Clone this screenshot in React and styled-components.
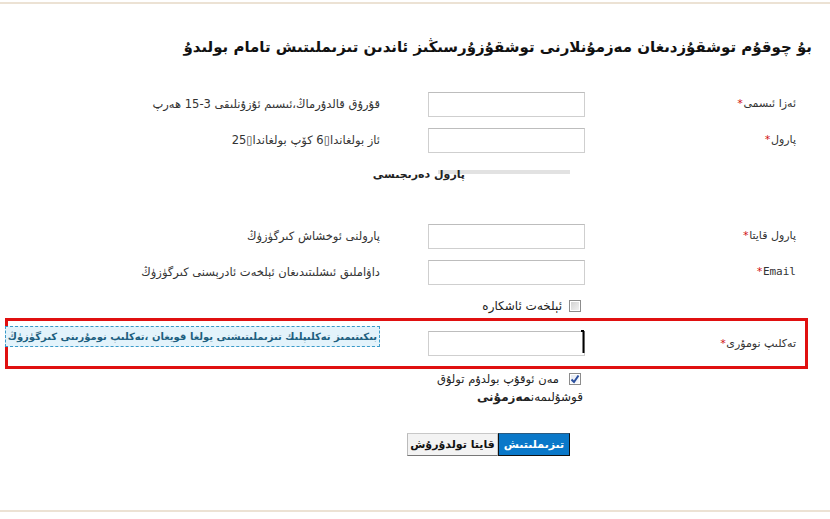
import React from 'react'
import styled, { createGlobalStyle } from 'styled-components'

const GlobalStyle = createGlobalStyle`
  html, body {
    margin: 0;
    padding: 0;
    background: #fff;
    overflow: hidden;
  }
  body {
    font-family: 'DejaVu Sans', Tahoma, sans-serif;
  }
`

const fields = [
  { label: 'ئەزا ئىسمى', hint: 'قۇرۇق قالدۇرماڭ،ئىسىم ئۇزۇنلىقى 3-15 ھەرپ' },
  { label: 'پارول', hint: 'ئاز بولغاندا▯6 كۆپ بولغاندا▯25', strength: true },
  { label: 'پارول قايتا', hint: 'پارولنى ئوخشاش كىرگۈزۈڭ', gap: true },
  { label: 'Email', hint: 'داۋاملىق ئىشلىتىدىغان ئېلخەت ئادرېسنى كىرگۈزۈڭ', mono: true }
]

const App = () => {
  return (
    <Page>
      <GlobalStyle />
      <Rule />
      <Title>بۇ چوقۇم توشقۇزدىغان مەزمۇنلارنى توشقۇزۇرسىڭىز ئاندىن تىزىملىتىش تامام بولىدۇ</Title>
      <Form>
        {fields.map(field => (
          <React.Fragment key={field.label}>
            <Row $gap={field.gap}>
              <Label $mono={field.mono}>
                {field.label}
                <Star>*</Star>
              </Label>
              <Input />
              <Hint>{field.hint}</Hint>
            </Row>
            {field.strength && (
              <StrengthRow>
                <span />
                <Strength>
                  <Bar />
                  <StrengthText>پارول دەرىجىسى</StrengthText>
                </Strength>
              </StrengthRow>
            )}
          </React.Fragment>
        ))}
        <CheckRow>
          <span />
          <CheckLine>
            <Box />
            <CheckText>ئېلخەت ئاشكارە</CheckText>
          </CheckLine>
        </CheckRow>
        <InviteRow>
          <InviteLabel>
            تەكلىپ نومۇرى
            <Star>*</Star>
          </InviteLabel>
          <InputWrap>
            <InviteInput />
            <Cursor width='6' height='24' viewBox='0 0 6 24'>
              <path d='M1 1 H4 M3.5 1 V23' stroke='#000' strokeWidth='2' fill='none' />
            </Cursor>
          </InputWrap>
          <TipCell>
            <Tip>بىكىتىمىز تەكلىپلىك تىزىملىتىشنى يولغا قويغان ،تەكلىپ نومۇرىنى كىرگۈزۈڭ</Tip>
          </TipCell>
        </InviteRow>
        <AgreeRow>
          <span />
          <CheckLine>
            <Box $checked>
              <svg width='10' height='10' viewBox='0 0 10 10'>
                <path d='M1.5 5.5 L4 8 L8.5 1.5' stroke='#2a4f9e' strokeWidth='2' fill='none' />
              </svg>
            </Box>
            <CheckText $wide>مەن ئوقۇپ بولدۇم تولۇق</CheckText>
          </CheckLine>
        </AgreeRow>
        <TermsRow>
          <span />
          <Terms>
            قوشۇلىمەن<b>مەزمۇنى</b>
          </Terms>
        </TermsRow>
        <ButtonRow>
          <span />
          <Buttons>
            <Submit>تىزىملىتىش</Submit>
            <Reset>قايتا تولدۇرۇش</Reset>
          </Buttons>
        </ButtonRow>
      </Form>
      <BottomRule />
    </Page>
  )
}

export default App

const Page = styled.div`
  direction: rtl;
  width: 830px;
  height: 519px;
  background: #fff;
  color: #333;
  font-size: 12px;
`

const Rule = styled.div`
  margin-top: 2px;
  height: 2px;
  background: #ece2d4;
`

const BottomRule = styled.div`
  margin-top: 54px;
  height: 2px;
  background: #ece2d4;
`

const Title = styled.h1`
  margin: 32px 0 0;
  padding-right: 18px;
  font-size: 15px;
  line-height: 22px;
  font-weight: 700;
  color: #111;
  white-space: nowrap;
`

const Form = styled.div`
  margin-top: 28px;
`

const Row = styled.div`
  display: grid;
  grid-template-columns: 211px 157px 1fr;
  align-items: center;
  height: 36px;
  padding-right: 34px;
  margin-top: ${props => (props.$gap ? '28px' : '0')};
`

const Label = styled.div`
  font-family: ${props => (props.$mono ? "'DejaVu Sans Mono', 'Liberation Mono', monospace" : "'DejaVu Sans', sans-serif")};
  font-size: 11px;
  line-height: 16px;
  color: #333;
`

const Star = styled.span`
  color: #d01010;
  font-family: 'DejaVu Sans Mono', monospace;
`

const Input = styled.input`
  box-sizing: border-box;
  width: 157px;
  height: 25px;
  margin: 0;
  border: 1px solid #cfcfcf;
  border-top-color: #bdbdbd;
  background: #fff;
  outline: none;
`

const Hint = styled.div`
  padding-right: 48px;
  font-size: 11.5px;
  line-height: 16px;
  color: #333;
  white-space: nowrap;
`

const StrengthRow = styled.div`
  display: grid;
  grid-template-columns: 211px 1fr;
  align-items: center;
  height: 32px;
  padding-right: 34px;
`

const Strength = styled.div`
  display: flex;
  align-items: center;
`

const Bar = styled.div`
  flex: none;
  width: 132px;
  height: 4px;
  margin-right: 15px;
  margin-top: -4px;
  background: #e2e2e2;
`

const StrengthText = styled.span`
  position: relative;
  margin-right: -27px;
  font-weight: 700;
  font-size: 11px;
  color: #222;
  white-space: nowrap;
`

const CheckRow = styled.div`
  display: grid;
  grid-template-columns: 211px 1fr;
  align-items: center;
  height: 24px;
  padding: 4px 34px 0 0;
`

const CheckLine = styled.div`
  display: flex;
  align-items: center;
  gap: 7px;
  padding-right: 4px;
`

const Box = styled.span`
  box-sizing: border-box;
  display: inline-flex;
  align-items: center;
  justify-content: center;
  width: 12px;
  height: 12px;
  border: 1px solid #8c8c8c;
  background: ${props =>
    props.$checked
      ? 'linear-gradient(135deg, #e4e8f0, #fbfcfe)'
      : 'linear-gradient(135deg, #cfcfcf, #f4f4f4)'};
  box-shadow: inset 0 0 0 1px #fff;
`

const CheckText = styled.span`
  font-size: ${props => (props.$wide ? '11.5px' : '12px')};
  color: #222;
  margin-right: ${props => (props.$wide ? '3px' : '0')};
  white-space: nowrap;
`

const InviteRow = styled.div`
  display: grid;
  grid-template-columns: 211px 157px 1fr;
  align-items: start;
  height: 41px;
  margin: 0 22px 0 5px;
  padding: 4px 9px 0 0;
  border: 3px solid #e01010;
`

const InviteLabel = styled(Label)`
  margin-top: 11px;
`

const InputWrap = styled.div`
  position: relative;
  margin-top: 6px;
`

const InviteInput = styled(Input)`
  display: block;
`

const Cursor = styled.svg`
  position: absolute;
  left: 152px;
  top: -1px;
`

const TipCell = styled.div`
  padding-right: 48px;
  margin-top: 1px;
`

const Tip = styled.div`
  box-sizing: border-box;
  height: 21px;
  padding: 0 2px;
  border: 1px dashed #3a9ac9;
  background: #e3f3fb;
  color: #1d5f7f;
  font-weight: 700;
  font-size: 10px;
  line-height: 19px;
  white-space: nowrap;
  overflow: hidden;
`

const AgreeRow = styled(CheckRow)`
  height: 20px;
  padding-top: 0;
`

const TermsRow = styled.div`
  display: grid;
  grid-template-columns: 213px 1fr;
  height: 18px;
  line-height: 16px;
  padding-right: 34px;
`

const Terms = styled.div`
  font-size: 12px;
  color: #222;
  b {
    font-weight: 700;
  }
`

const ButtonRow = styled.div`
  display: grid;
  grid-template-columns: 226px 1fr;
  margin-top: 26px;
  padding-right: 34px;
`

const Buttons = styled.div`
  display: flex;
`

const Submit = styled.button`
  box-sizing: border-box;
  width: 72px;
  height: 23px;
  margin: 0;
  padding: 0;
  border: 1px solid #111;
  border-top-color: #2a5a80;
  background: #0a78c9;
  color: #fff;
  font-family: 'DejaVu Sans', sans-serif;
  font-size: 11px;
  font-weight: 700;
`

const Reset = styled.button`
  box-sizing: border-box;
  width: 91px;
  height: 23px;
  margin: 0;
  padding: 0;
  border: 1px solid #c8c8c8;
  border-bottom-color: #777;
  border-left-color: #bbb;
  background: #f3f3f3;
  color: #111;
  font-family: 'DejaVu Sans', sans-serif;
  font-size: 11px;
  font-weight: 700;
`
